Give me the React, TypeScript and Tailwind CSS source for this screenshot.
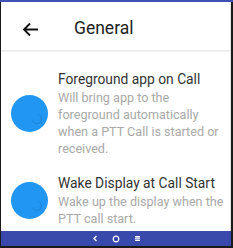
import React from 'react';

const settings = [
  {
    title: 'Foreground app on Call',
    desc: 'Will bring app to the foreground automatically when a PTT Call is started or received.',
  },
  {
    title: 'Wake Display at Call Start',
    desc: 'Wake up the display when the PTT call start.',
  },
];

const Toggle = () => (
  <div className="relative w-[37px] h-[37px] shrink-0 rounded-full bg-[#2196f3]">
    <div className="absolute right-[6px] bottom-[8px] w-[10px] h-[10px] rounded-full border-b border-r border-[#1a7fd0]" />
  </div>
);

export default function App() {
  return (
    <div
      className="w-[233px] h-[248px] flex flex-col bg-[#1a1a1a] overflow-hidden"
      style={{ fontFamily: 'Roboto, "Noto Sans", sans-serif' }}
    >
      <div className="h-[2px] bg-[#3f51b5] shrink-0" />
      <div className="flex-1 min-h-0 overflow-hidden flex flex-col ml-[1px] mr-[2px] bg-white border-r border-[#e4e4e4]">
        {/* Header */}
        <div className="h-[48px] pt-[6px] flex items-center shrink-0">
          <svg className="ml-[21px]" width="17" height="15" viewBox="0 0 17 15" fill="none">
            <path d="M16 7.5H2M8 1.5L2 7.5L8 13.5" stroke="#111" strokeWidth="1.8" />
          </svg>
          <span className="ml-[35px] text-[17.5px] text-[#1e1e1e] leading-none">General</span>
        </div>
        <div className="h-[2px] shrink-0 bg-gradient-to-b from-[#e6e6e6] to-[#f8f8f8]" />

        {/* Settings */}
        <div className="flex-1 flex flex-col pt-[18px] gap-[17px]">
          {settings.map((s) => (
            <div key={s.title} className="flex items-center">
              <div className="ml-[10px] mr-[10px]">
                <Toggle />
              </div>
              <div className="flex flex-col pr-[6px]">
                <div className="text-[13.8px] leading-[18px] text-[#333]">{s.title}</div>
                <div className="text-[12.6px] leading-[17px] text-[#a9a9a9] mt-[1px]">{s.desc}</div>
              </div>
            </div>
          ))}
        </div>
      </div>

      {/* Nav bar */}
      <div className="h-[15px] mb-[2px] ml-[1px] mr-[2px] bg-[#3949ab] flex items-center justify-center gap-[14px] shrink-0">
        <svg width="6" height="7" viewBox="0 0 6 7">
          <path d="M4.5 1L2 3.5L4.5 6" stroke="#fff" strokeWidth="1.3" fill="none" />
        </svg>
        <svg width="8" height="8" viewBox="0 0 8 8">
          <circle cx="4" cy="4" r="2.8" stroke="#fff" strokeWidth="1.2" fill="none" />
        </svg>
        <svg width="7" height="7" viewBox="0 0 7 7">
          <rect x="1" y="1" width="5" height="5" fill="#fff" />
          <path d="M1 2.8H6M1 4.4H6" stroke="#3949ab" strokeWidth="0.6" />
        </svg>
      </div>
    </div>
  );
}
